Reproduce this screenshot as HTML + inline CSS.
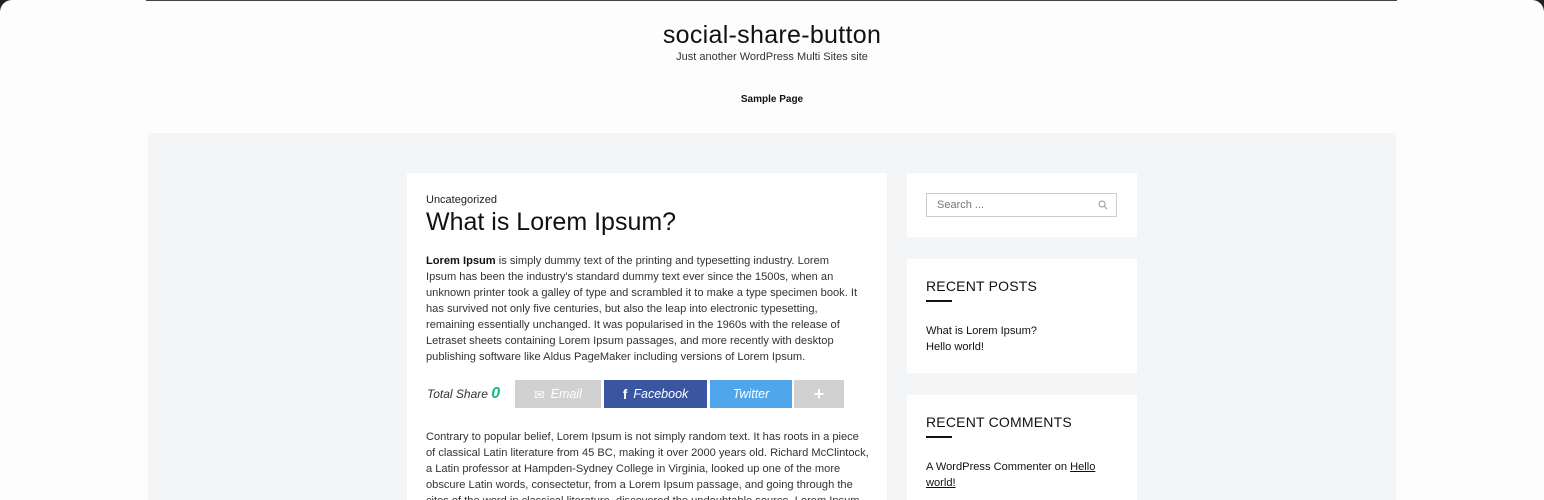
<!DOCTYPE html>
<html style="width:1544px;height:500px;overflow:hidden"><head><meta charset="utf-8"><style>
*{margin:0;padding:0;box-sizing:border-box}
body{width:1544px;height:500px;background:#222;font-family:"Liberation Sans",sans-serif;color:#222;overflow:hidden;position:relative}
.frame{position:absolute;left:0;top:0;width:1544px;height:500px;background:#fdfdfd;border-radius:12px 12px 0 0}
.topline{position:absolute;left:146px;top:0;width:1251px;height:1px;background:#444}
.gray{position:absolute;left:148px;top:133px;width:1248px;height:367px;background:#f4f5f7}
.abs{position:absolute}
.card{position:absolute;background:#fff}
.txt{font-size:11.1px;line-height:16px;color:#333;white-space:nowrap}
.btn{position:absolute;top:380px;height:28px;color:#fff;font-style:italic;font-size:12.5px;display:flex;align-items:center;justify-content:center;gap:6px}
h3{font-size:14px;font-weight:normal;color:#111;letter-spacing:.2px}
.bar{width:26px;height:2px;background:#111}
</style></head><body>
<div class="frame"></div>
<div class="topline"></div>
<div class="abs" style="left:0;width:1544px;top:21px;text-align:center;font-size:25px;color:#111;letter-spacing:.3px">social-share-button</div>
<div class="abs" style="left:0;width:1544px;top:51px;text-align:center;font-size:11px;color:#333">Just another WordPress Multi Sites site</div>
<div class="abs" style="left:0;width:1544px;top:94px;text-align:center;font-size:10px;color:#111;font-weight:bold">Sample Page</div>
<div class="gray"></div>
<div class="card" style="left:407px;top:173px;width:480px;height:327px"></div>
<div class="abs" style="left:426px;top:194px;font-size:11px;color:#222">Uncategorized</div>
<div class="abs" style="left:426px;top:208px;font-size:25px;color:#111">What is Lorem Ipsum?</div>
<div class="abs txt" style="left:426px;top:253px"><b style="color:#111">Lorem Ipsum</b> is simply dummy text of the printing and typesetting industry. Lorem<br>Ipsum has been the industry's standard dummy text ever since the 1500s, when an<br>unknown printer took a galley of type and scrambled it to make a type specimen book. It<br>has survived not only five centuries, but also the leap into electronic typesetting,<br>remaining essentially unchanged. It was popularised in the 1960s with the release of<br>Letraset sheets containing Lorem Ipsum passages, and more recently with desktop<br>publishing software like Aldus PageMaker including versions of Lorem Ipsum.</div>
<div class="abs" style="left:427px;top:385px;font-size:12px;font-style:italic;color:#333">Total Share <b style="color:#1bb48e;font-size:16px">0</b></div>
<div class="btn" style="left:515px;width:86px;background:#d1d1d1"><span style="font-style:normal">✉</span>Email</div>
<div class="btn" style="left:604px;width:103px;background:#3a56a0"><b style="font-style:normal;font-size:14px">f</b>Facebook</div>
<div class="btn" style="left:710px;width:82px;background:#4fa6ea">Twitter</div>
<div class="btn" style="left:794px;width:50px;background:#d1d1d1;font-style:normal;font-size:18px;font-weight:bold">+</div>
<div class="abs txt" style="left:426px;top:429px">Contrary to popular belief, Lorem Ipsum is not simply random text. It has roots in a piece<br>of classical Latin literature from 45 BC, making it over 2000 years old. Richard McClintock,<br>a Latin professor at Hampden-Sydney College in Virginia, looked up one of the more<br>obscure Latin words, consectetur, from a Lorem Ipsum passage, and going through the<br>cites of the word in classical literature, discovered the undoubtable source. Lorem Ipsum</div>
<div class="card" style="left:907px;top:173px;width:230px;height:64px"></div>
<div class="abs" style="left:926px;top:193px;width:191px;height:24px;border:1px solid #ccc;font-size:11px;color:#777;padding:5px 10px">Search ...
<svg style="position:absolute;right:8px;top:6px" width="10" height="10" viewBox="0 0 10 10"><circle cx="4" cy="4" r="3" fill="none" stroke="#999" stroke-width="1"/><path d="M6.2 6.2L9 9" stroke="#999"/></svg></div>
<div class="card" style="left:907px;top:259px;width:230px;height:114px"></div>
<h3 class="abs" style="left:926px;top:278px">RECENT POSTS</h3>
<div class="abs bar" style="left:926px;top:300px"></div>
<div class="abs txt" style="left:926px;top:323px;color:#111">What is Lorem Ipsum?<br>Hello world!</div>
<div class="card" style="left:907px;top:395px;width:230px;height:105px"></div>
<h3 class="abs" style="left:926px;top:414px">RECENT COMMENTS</h3>
<div class="abs bar" style="left:926px;top:436px"></div>
<div class="abs txt" style="left:926px;top:459px;color:#111">A WordPress Commenter on <u>Hello</u><br><u>world!</u></div>
</body></html>
